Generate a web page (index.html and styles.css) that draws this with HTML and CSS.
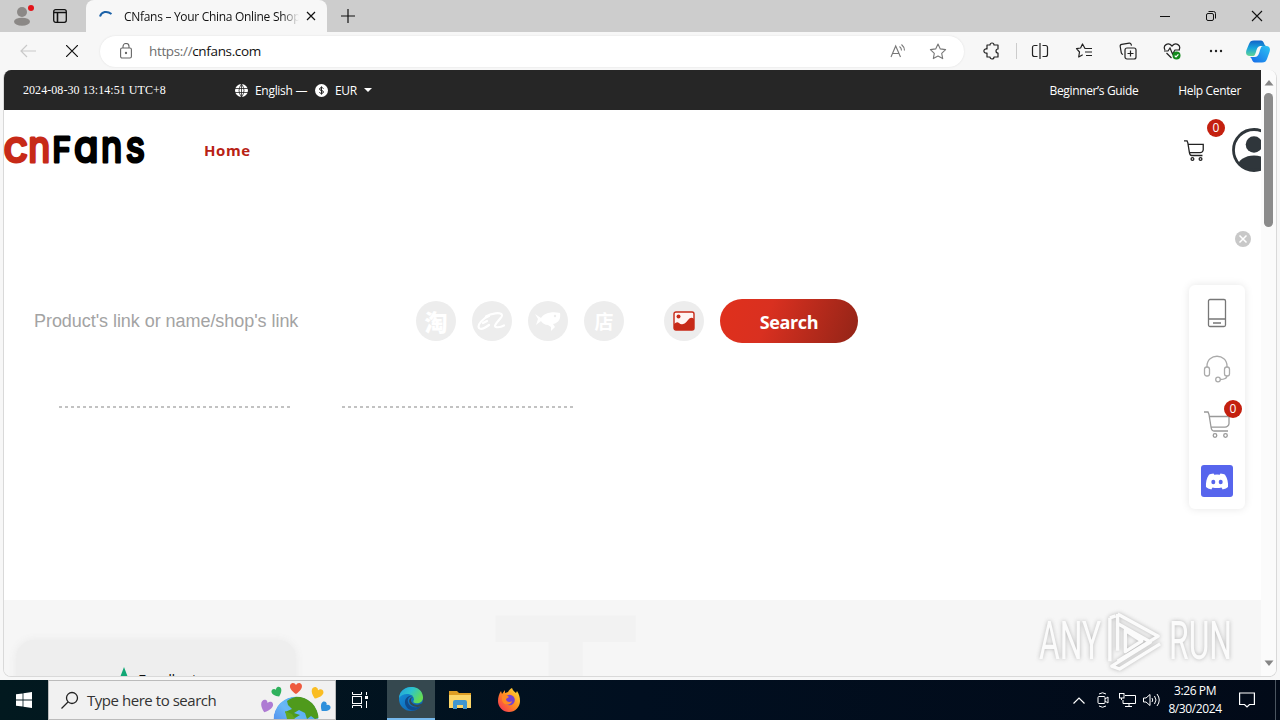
FILE: index.html
```html
<!DOCTYPE html>
<html lang="en">
<head>
  <meta charset="UTF-8" />
  <meta name="viewport" content="width=device-width, initial-scale=1" />
  <title>CNfans – Your China Online Shop</title>
  <link rel="stylesheet" href="styles.css">
</head>
<body>
  <div class="tabstrip">
    <svg class="profile" width="26" height="26" viewBox="0 0 26 26"><circle cx="13" cy="9" r="5" fill="#8b8886"/><ellipse cx="13" cy="18.700" rx="8" ry="4" fill="#8b8886"/><circle cx="22" cy="5" r="3" fill="#e3141a"/></svg>
    <svg class="workspaces" width="14" height="14" viewBox="0 0 14 14" fill="none" stroke="#111" stroke-width="1.300"><rect x=".7" y=".7" width="12.600" height="12.600" rx="2"/><path d="M1 3.500h12M4.500 3.500v10" stroke-width="1.600"/></svg>
    <div class="tab">
      <svg class="spinner" width="14" height="14" viewBox="0 0 14 14" fill="none" stroke="#1c62a8" stroke-width="2"><path d="M1 6.500C2.500 1.500 8 .5 12.500 4"/></svg>
      <span class="tab-title">CNfans – Your China Online Shop</span>
      <svg class="tab-close" width="10" height="10" viewBox="0 0 10 10" stroke="#111" stroke-width="1.200"><path d="M1 1l8 8M9 1l-8 8"/></svg>
    </div>
    <svg class="new-tab" width="14" height="14" viewBox="0 0 14 14" stroke="#111" stroke-width="1.200"><path d="M7 0v14M0 7h14"/></svg>
    <div class="window-buttons">
      <svg width="12" height="12" viewBox="0 0 12 12" stroke="#111"><path d="M1 6.500h10"/></svg>
      <svg width="12" height="12" viewBox="0 0 12 12" fill="none" stroke="#111"><rect x="1.500" y="3.500" width="7" height="7" rx="1.500"/><path d="M3.500 1.500h5a2 2 0 0 1 2 2v5"/></svg>
      <svg width="12" height="12" viewBox="0 0 12 12" stroke="#111" stroke-width="1.100"><path d="M1 1l10 10M11 1L1 11"/></svg>
    </div>
  </div>

  <div class="toolbar">
    <svg class="back" width="16" height="14" viewBox="0 0 16 14" fill="none" stroke="#c9c9c9" stroke-width="1.200"><path d="M16 7H1M7 1L1 7l6 6"/></svg>
    <svg class="stop" width="12" height="12" viewBox="0 0 12 12" stroke="#111" stroke-width="1.200"><path d="M0 0l12 12M12 0L0 12"/></svg>
    <div class="address">
      <svg class="lock" width="12" height="16" viewBox="0 0 12 16" fill="none" stroke="#666" stroke-width="1.100"><rect x=".6" y="5" width="10.800" height="10" rx="1.500"/><path d="M3 5V3.500a3 3 0 0 1 6 0V5"/><circle cx="6" cy="10" r=".6" fill="#666"/></svg>
      <span class="url"><span class="scheme">https://</span>cnfans.com</span>
      <svg class="read" width="17" height="16" viewBox="0 0 17 16" fill="none" stroke="#777" stroke-width="1.100"><path d="M1 14L5.700 3l4.800 11M2.700 10.500h6M9.500 3.500q2 1.500 2 4M11.500 1.500q3 2.500 3 6"/></svg>
      <svg class="fav" width="18" height="17" viewBox="0 0 18 17" fill="none" stroke="#777" stroke-width="1.100" stroke-linejoin="round"><path d="M9 1l2.300 4.900 5.300.7-3.900 3.700 1 5.300L9 13l-4.700 2.600 1-5.300L1.400 6.600l5.300-.7z"/></svg>
    </div>
    <div class="tools">
      <svg width="18" height="18" viewBox="0 0 18 18" fill="none" stroke="#222" stroke-width="1.200" stroke-linejoin="round"><path d="M4 3h3a2 2 0 0 1 4 0h4v4a2 2 0 1 0 0 4v4h-4a2 2 0 0 1-4 0H4v-4a2.200 2.200 0 1 1 0-4z"/></svg>
      <i class="tool-sep"></i>
      <svg width="18" height="18" viewBox="0 0 18 18" fill="none" stroke="#222" stroke-width="1.200"><path d="M6.500 3.500H3.500a2 2 0 0 0-2 2v7a2 2 0 0 0 2 2h3M11.500 3.500h3a2 2 0 0 1 2 2v7a2 2 0 0 1-2 2h-3M9 1v16"/></svg>
      <svg width="18" height="18" viewBox="0 0 18 18" fill="none" stroke="#222" stroke-width="1.200" stroke-linejoin="round"><path d="M13 6.500H10L7.500 2 5.600 6 1.500 6.700l3 3.300-.8 5 4-2.200M10.500 6.500H17M10 10h7M11 13.500h6"/></svg>
      <svg width="18" height="18" viewBox="0 0 18 18" fill="none" stroke="#222" stroke-width="1.200"><rect x="6" y="6" width="11" height="11" rx="2"/><path d="M11.500 8.500v6M8.500 11.500h6M4 12.500c-1-.3-1.500-.8-1.700-1.700L1.200 4.500c-.2-1.200.4-2 1.500-2.200l7.500-1.100c1.200-.2 2 .4 2.300 2.500"/></svg>
      <svg width="18" height="18" viewBox="0 0 18 18" fill="none" stroke="#222" stroke-width="1.200"><path d="M2 8C-.5 3.500 5-.5 9 4c4-4.500 9.500-.5 7 4M3.500 11l5 5M1 9h4l2-3 2.500 6L12 8h5"/><circle cx="13.500" cy="13.500" r="4" fill="#138a1c" stroke="none"/><path d="M11.700 13.600l1.300 1.300 2.400-2.600" stroke="#fff"/></svg>
      <svg width="18" height="18" viewBox="0 0 18 18" fill="#222"><circle cx="4" cy="9" r="1.200"/><circle cx="9" cy="9" r="1.200"/><circle cx="14" cy="9" r="1.200"/></svg>
      <svg class="copilot" width="24" height="23" viewBox="0 0 24 23">
        <defs>
          <linearGradient id="cp1" x1="0" y1="0" x2="0" y2="1"><stop offset="0" stop-color="#1263c8"/><stop offset=".5" stop-color="#18a5dc"/><stop offset="1" stop-color="#63d593"/></linearGradient>
          <linearGradient id="cp2" x1="1" y1="0" x2="0" y2="1"><stop offset="0" stop-color="#2bc4f3"/><stop offset="1" stop-color="#1668e8"/></linearGradient>
        </defs>
        <path d="M8 .5h7c3 0 3 5 5 5.500h-5c-3 0-4 2-5 6l-1 2.500c-.5 1-1 1.500-3 1.500H4c-4 0-4.500-3-3.500-6L3 4C4 1.500 5 .5 8 .5z" fill="url(#cp1)"/>
        <path d="M16 22.500H9c-3 0-3-5-5-5.500h5c3 0 4-3 5-7l1-2.500C15.500 6.500 16 6 18 6h2c4 0 4.500 3 3.500 6L21 19c-1 2.500-2 3.500-5 3.500z" fill="url(#cp2)"/>
      </svg>
    </div>
  </div>

  <div class="viewport">
    <div class="page">
      <div class="topbar">
        <span class="clock">2024-08-30 13:14:51 UTC+8</span>
        <div class="locale">
          <svg width="13" height="13" viewBox="0 0 13 13"><circle cx="6.500" cy="6.500" r="6.500" fill="#fff"/><path d="M0 4.500h13M0 8.500h13M6.500 0v13M6.500 0Q1.500 6.500 6.500 13Q11.500 6.500 6.500 0" fill="none" stroke="#262626" stroke-width=".8"/></svg>
          <span class="lang">English —</span>
          <svg width="13" height="13" viewBox="0 0 13 13"><circle cx="6.500" cy="6.500" r="6.500" fill="#fff"/><path d="M8.500 4.600Q8 3.600 6.500 3.600q-1.900 0-1.900 1.400T6.500 6.500t1.900 1.500-1.900 1.400q-1.600 0-2.100-1.100M6.500 2.400v8.200" fill="none" stroke="#262626"/></svg>
          <span class="cur">EUR</span>
          <i class="caret"></i>
        </div>
        <div class="top-links">
          <span class="guide">Beginner’s Guide</span>
          <span class="help">Help Center</span>
        </div>
      </div>

      <div class="header">
        <svg class="logo" width="142" height="40" viewBox="0 0 142 40">
          <g class="logo-lower logo-red">
            <text transform="translate(-.5 32)">c</text>
            <text transform="translate(24.200 32) scale(.87 1)">n</text>
          </g>
          <text class="logo-upper" transform="translate(48.500 32) scale(.92 1)">F</text>
          <g class="logo-lower">
            <text transform="translate(70 32) scale(.93 1)">a</text>
            <text transform="translate(97 32) scale(.84 1)">n</text>
            <text transform="translate(121.800 32) scale(.84 1)">s</text>
          </g>
        </svg>
        <span class="nav-home">Home</span>
        <div class="cart">
          <svg width="20" height="21" viewBox="0 0 26 27" fill="none" stroke="#222" stroke-width="1.700"><use href="#cart-shape"/></svg>
          <span class="badge">0</span>
        </div>
        <svg class="avatar" width="44" height="44" viewBox="0 0 44 44"><defs><clipPath id="av"><circle cx="22" cy="22" r="21"/></clipPath></defs><circle cx="22" cy="16.500" r="8.300" fill="#2f363b"/><ellipse cx="22" cy="39" rx="16.500" ry="11.500" fill="#2f363b" clip-path="url(#av)"/><circle cx="22" cy="22" r="20.500" fill="none" stroke="#2f363b" stroke-width="2.800"/></svg>
      </div>

      <div class="hero">
        <div class="search-row">
          <span class="placeholder">Product's link or name/shop's link</span>
          <div class="sources">
            <span class="round"><b class="tao">淘</b></span>
            <span class="round"><svg width="30" height="22" viewBox="0 0 30 22" fill="none" stroke="#fff" stroke-linecap="round" stroke-linejoin="round"><path d="M12 6C6 8 0 15 2 18c2 2 6 0 10-3M6 13l4-2" stroke-width="2.200"/><path d="M9 6.500C14 3 24 2 25 5c1 2-7 8-7 11 0 2 5 1.500 9-.5" stroke-width="2.200"/></svg></span>
            <span class="round"><svg width="28" height="24" viewBox="0 0 28 24" fill="#fff"><path d="M1 5l6 4c3-5 11-7 19-5 1 5-1 10-7 11l2 3-4 4v-4l-3-2c-3 0-6-2-7-4L2 16l2-6z"/><circle cx="21" cy="7" r="1.200" fill="#ededed"/></svg></span>
            <span class="round"><b class="dian">店</b></span>
          </div>
          <span class="round"><svg width="22" height="20" viewBox="0 0 22 20"><rect x="1" y="1" width="20" height="18" rx="2" fill="#fff5f3" stroke="#c72a18" stroke-width="1.400"/><circle cx="5.500" cy="5.500" r="2" fill="#c72a18"/><path d="M1 13q3-3 5-1t4 1q2 0 5-4t6-1v9q0 2-2 2H3q-2 0-2-2z" fill="#c72a18"/></svg></span>
          <span class="search-btn">Search</span>
        </div>
        <div class="dashes"><i class="dash"></i><i class="dash"></i></div>
      </div>

      <div class="reviews">
        <div class="review-card">
          <svg width="28" height="28" viewBox="0 0 28 28" fill="#12a876"><path d="M14 0l4 10.500h10l-8 6.500 3 11-9-6.500L5 28l3-11-8-6.500h10z"/></svg>
          <span class="excellent">Excellent</span>
        </div>
        <span class="ghost">T</span>
      </div>
    </div>
    <div class="scrollbar">
      <svg width="10" height="6" viewBox="0 0 10 6" fill="#858585"><path d="M5 0l4.500 5.500h-9z"/></svg>
      <i class="thumb"></i>
      <svg class="down" width="10" height="6" viewBox="0 0 10 6" fill="#858585"><path d="M5 6L.5.500h9z"/></svg>
    </div>
  </div>

  <svg class="close-panel" width="16" height="16" viewBox="0 0 16 16"><circle cx="8" cy="8" r="8" fill="#c8c8c8"/><path d="M4.500 4.500l7 7M11.500 4.500l-7 7" stroke="#fff" stroke-width="1.500"/></svg>
  <div class="side-panel">
    <svg width="20" height="30" viewBox="0 0 20 30" fill="none" stroke="#777" stroke-width="1.300"><rect x="1.500" y="1.500" width="17" height="27" rx="1.500"/><path d="M1.500 21h17M6 25h8"/></svg>
    <svg width="28" height="28" viewBox="0 0 28 28" fill="none" stroke="#aaa" stroke-width="1.300"><path d="M4 12v-1C4-2 24-2 24 11v1M24 20.500c0 3-4 4-7 4"/><rect x="1.500" y="12" width="5" height="9" rx="2.300"/><rect x="21.500" y="12" width="5" height="9" rx="2.300"/><circle cx="15" cy="24.500" r="2.300"/></svg>
    <div class="side-cart">
      <svg width="26" height="27" viewBox="0 0 26 27" fill="none" stroke="#999" stroke-width="1.300"><g id="cart-shape"><path d="M0 1h4l1 2.500L7 16c.4 3 1 4 3 4h14M5.300 5.500H25v7c0 2-2 3.700-4 3.700H7"/><circle cx="11" cy="24.500" r="1.800"/><circle cx="21.500" cy="24.500" r="1.800"/></g></svg>
      <span class="badge">0</span>
    </div>
    <svg width="32" height="32" viewBox="0 0 32 32"><rect width="32" height="32" rx="3" fill="#5765ed"/><path d="M12.500 8.500c-2 .2-3.500.7-4.500 1.300C5.500 13.500 4.700 17.500 5 22c2 1.500 3.700 2.100 5.300 2.400l1.200-2q4.500 1.200 9 0l1.200 2c1.600-.3 3.500-.9 5.300-2.400.4-4.500-.6-8.500-3-12.200-1-.6-2.500-1.100-4.500-1.300l-.8 1.300q-2.700-.4-5.400 0z" fill="#fff"/><ellipse cx="12.300" cy="17" rx="2" ry="2.200" fill="#5765ed"/><ellipse cx="19.700" cy="17" rx="2" ry="2.200" fill="#5765ed"/></svg>
  </div>

  <div class="watermark">
    <span class="wm-text">ANY</span>
    <svg width="58" height="64" viewBox="0 0 60 64" fill="none" stroke="#fff" stroke-width="3.500" stroke-linejoin="round"><path d="M4 8v45M12 4v38M12 4l42 23L12 53M4 8l6-2M12 14l34 19L6 58l8 3 42-26M20 21v22l17-11z"/></svg>
    <span class="wm-text">RUN</span>
  </div>

  <div class="taskbar">
    <div class="start"><svg width="16" height="16" viewBox="0 0 16 16" fill="#fff"><path d="M0 2.300L6.600 1.400V7.600H0zM7.400 1.300L16 0v7.600H7.400zM0 8.400h6.600v6.200L0 13.700zM7.400 8.400H16V16l-8.600-1.300z"/></svg></div>
    <div class="search-box">
      <svg width="18" height="18" viewBox="0 0 18 18" fill="none" stroke="#222" stroke-width="1.300"><circle cx="11" cy="7" r="5.500"/><path d="M7 11l-6.500 6.500"/></svg>
      <span class="search-text">Type here to search</span>
      <svg class="earth" width="72" height="38" viewBox="0 0 72 38">
        <defs>
          <path id="heart" d="M0 6C-9 0-6-5-3-5Q-1-5 0-3Q1-5 3-5C6-5 9 0 0 6z"/>
          <linearGradient id="sea" x1="0" y1="1" x2="1" y2="0"><stop offset="0" stop-color="#3f6fe8"/><stop offset=".5" stop-color="#6ab8f5"/><stop offset="1" stop-color="#3fa0ef"/></linearGradient>
          <clipPath id="globe"><circle cx="36" cy="38" r="22.500"/></clipPath>
        </defs>
        <g clip-path="url(#globe)"><circle cx="36" cy="38" r="22.500" fill="url(#sea)"/><path d="M27 20q8-6 17-4l13 8 4 12-6 2-4-3-4 3-2-6-6-3-5 3 6 2-5 3-7-2-3-4 7-3-4-4z" fill="#4f9a1c"/><path d="M25 30l7 3 3 5h-8z" fill="#63a81e"/></g>
        <use href="#heart" transform="translate(36 7)" fill="#ee5a3e"/>
        <use href="#heart" transform="translate(17 11) rotate(-25) scale(.85)" fill="#2fb15c"/>
        <use href="#heart" transform="translate(57 12) rotate(22)" fill="#fabd22"/>
        <use href="#heart" transform="translate(6.500 25) rotate(20) scale(1 1.100)" fill="#ae7bd3"/>
        <use href="#heart" transform="translate(65 26) rotate(40) scale(.85)" fill="#2e90dc"/>
      </svg>
    </div>
    <div class="task-item"><svg width="16" height="16" viewBox="0 0 16 16" fill="none" stroke="#fff"><rect x=".5" y="4.500" width="9" height="7"/><path d="M.5 0v2.500h9V0M.5 16v-2.500h9V16M14.500 0v3M14.500 9v7"/><path d="M13 4h3v3h-3z" fill="#fff" stroke="none"/></svg></div>
    <div class="task-item active"><svg width="24" height="24" viewBox="0 0 24 24">
      <defs><linearGradient id="eg1" x1="0" y1="0" x2="1" y2=".5"><stop offset="0" stop-color="#239ddd"/><stop offset=".5" stop-color="#2cc3ce"/><stop offset="1" stop-color="#65dc53"/></linearGradient><linearGradient id="eg2" x1="0" y1="0" x2="1" y2="1"><stop offset="0" stop-color="#1695dd"/><stop offset="1" stop-color="#0d57a8"/></linearGradient></defs>
      <circle cx="12" cy="12" r="12" fill="url(#eg2)"/><path d="M0 11C1-3 23-4 24 10c.3 5-4 7-8 6-3-.8-1-2-1-4C14 6 4 5 0 11z" fill="url(#eg1)"/><path d="M14 9c-4 0-6 3-5 6 1 5 8 7 13 4-5 7-15 5-16-3-.5-5 4-8 8-7z" fill="#114a8b"/><path d="M14.500 10c-4 1-3 6 1 7.500 3 1 6 0 8-1.500v2l-2 1.500c-5 1.500-10-1-11-4-1-3 1-5.500 4-5.500z" fill="#35484f"/></svg></div>
    <div class="task-item"><svg width="22" height="20" viewBox="0 0 22 20"><path d="M0 1h8l2 2h12v4H0z" fill="#dd9d24"/><path d="M0 5h22v13H0z" fill="#fbd568"/><path d="M4 19v-7q0-2 2-2h10q2 0 2 2v7h-4v-4H8v4z" fill="#3f96cf"/></svg></div>
    <div class="task-item"><svg width="24" height="24" viewBox="0 0 24 24">
      <defs><linearGradient id="ff" x1="1" y1="0" x2="0" y2="1"><stop offset="0" stop-color="#ffe838"/><stop offset=".5" stop-color="#ff8b20"/><stop offset="1" stop-color="#f4265f"/></linearGradient></defs>
      <path d="M15 0c1 3 3 4 4 5l1-2c2 3 3 6 3 10a11 11 0 0 1-22 0C1 9 2 6 4 3l1 3 3-4v3l3-1c1-2 2-3 4-4z" fill="url(#ff)"/><circle cx="12.500" cy="12" r="5.300" fill="#7542cf"/><path d="M5 8c3-2 5-1 7 1l-3 2c0 3 4 4 6 2-1 5-9 5-10-1z" fill="#ff8a22"/></svg></div>
    <div class="tray">
      <svg width="12" height="7" viewBox="0 0 12 7" fill="none" stroke="#fff" stroke-width="1.200"><path d="M.5 6.500L6 1l5.500 5.500"/></svg>
      <svg width="12" height="16" viewBox="0 0 12 16" fill="none" stroke="#fff"><rect x="1" y="4.500" width="7" height="7" rx="1"/><path d="M8 7l3-2v6L8 9M2 2q3.500-2.500 7 0M2 14q3.500 2.500 7 0"/></svg>
      <svg width="17" height="14" viewBox="0 0 17 14" fill="none" stroke="#fff"><path d="M6 2.500h10.500v8H4V7M10 10.500v3M6 13.500h7"/><rect x=".5" y=".5" width="4.500" height="4.500"/><path d="M2.500 5v2"/></svg>
      <svg width="17" height="14" viewBox="0 0 17 14" fill="none" stroke="#fff"><path d="M.5 5v4h2.500l4 3.500v-11L3 5zM9 5q1.500 2 0 4M11.500 3q3 4 0 8M14 1q4.500 6 0 12"/></svg>
      <div class="datetime"><span class="time">3:26 PM</span><span class="date">8/30/2024</span></div>
      <svg class="notify" width="16" height="16" viewBox="0 0 16 16" fill="none" stroke="#fff" stroke-width="1.200"><path d="M.6 1h14.800v11.500H10.500L8 15l-2.500-2.500H.6z"/></svg>
      <i class="peek"></i>
    </div>
  </div>
</body>
</html>
```

FILE: styles.css
```css
* {
  margin: 0; padding: 0; box-sizing: border-box;
}
body {
  width: 1280px; height: 720px;
  overflow: hidden;
  position: relative;
  background: #f7f7f7;
  font-family: "Open Sans", "Noto Sans", sans-serif;
  font-size: 12px;
  color: #111;
}
svg {
  display: block;
  flex-shrink: 0;
}
span {
  white-space: nowrap;
}
.tabstrip {
  height: 32px;
  background: #cdcdcd;
  display: flex;
  align-items: center;
}
.profile { margin-left: 9px; }
.workspaces { margin-left: 18px; }
.tab {
  width: 241px;
  height: 32px;
  margin-left: 19px;
  padding-left: 13px;
  background: #f7f7f7;
  border-radius: 8px 8px 0 0;
  display: flex;
  align-items: center;
}
.spinner { margin-top: 1px; }
.tab-title {
  width: 175px;
  margin-left: 11px;
  overflow: hidden;
  letter-spacing: -0.3px;
  -webkit-mask-image: linear-gradient(90deg, #000 90%, transparent);
}
.tab-close { margin-left: 7px; }
.new-tab { margin-left: 14px; }
.window-buttons {
  margin-left: auto;
  padding-right: 17px;
  display: flex;
  gap: 34px;
}
.toolbar {
  height: 38px;
  display: flex;
  align-items: center;
  background: #f7f7f7;
}
.back { margin-left: 20px; }
.stop { margin-left: 30px; }
.address {
  width: 864px;
  height: 31px;
  margin-left: 22px;
  padding: 0 17px 0 20px;
  background: #fff;
  border-radius: 16px;
  box-shadow: 0 0 2px #ddd;
  display: flex;
  align-items: center;
}
.url {
  margin-left: 17px;
  font-size: 13.500px;
  letter-spacing: -0.35px;
}
.scheme { color: #6d6d6d; }
.read { margin-left: auto; }
.fav { margin-left: 22px; }
.tools {
  flex: 1;
  display: flex;
  align-items: center;
  padding-left: 19px;
  gap: 26px;
}
.tool-sep {
  width: 1px;
  height: 16px;
  margin: 0 -12px 0 -11px;
  background: #ccc;
}
.copilot { margin-left: -5px; }
.viewport {
  width: 1274px;
  height: 607px;
  margin-left: 3px;
  border: 1px solid #d9d9d9;
  border-top: 0;
  border-radius: 8px;
  overflow: hidden;
  background: #fff;
  display: flex;
}
.page {
  width: 1257px;
  overflow: hidden;
}
.topbar {
  height: 40px;
  background: #262626;
  color: #fff;
  display: flex;
  align-items: center;
  padding: 0 20px 0 19px;
}
.clock {
  width: 212px;
  font-family: "Liberation Serif", serif;
  font-size: 12px;
  letter-spacing: 0.06px;
}
.locale {
  display: flex;
  align-items: center;
}
.lang {
  width: 54px;
  margin: 0 6px 0 7px;
  letter-spacing: -0.3px;
}
.cur { width: 22px; margin-left: 7px; letter-spacing: -0.3px; }
.caret {
  margin-left: 7px;
  border: 4px solid transparent;
  border-top-color: #fff;
  border-bottom: 0;
}
.top-links {
  margin-left: auto;
  display: flex;
  gap: 40px;
  letter-spacing: -0.36px;
}
.header {
  height: 80px;
  display: flex;
  align-items: center;
  position: relative;
}
.logo { overflow: visible; }
.logo text {
  font-family: "Inter", sans-serif;
  font-weight: 400;
  font-feature-settings: "cv11";
  fill: #000;
  stroke: #000;
  stroke-width: 3;
  stroke-linejoin: round;
}
.logo .logo-red text { fill: #c72a18; stroke: #c72a18; }
.logo-lower { font-size: 43px; }
.logo-upper { font-size: 34px; }
.nav-home {
  margin-left: 58px;
  font-size: 15px;
  font-weight: 700;
  letter-spacing: 0.6px;
  color: #b82214;
}
.cart {
  margin-left: auto;
  margin-right: 28px;
  position: relative;
}
.badge {
  position: absolute;
  top: -21px;
  left: 23px;
  width: 18px;
  height: 18px;
  border-radius: 50%;
  background: #c4200f;
  color: #fff;
  text-align: center;
  line-height: 18px;
}
.avatar { margin-right: -15px; }
.hero {
  height: 410px;
  padding-top: 109px;
}
.search-row {
  display: flex;
  align-items: center;
  padding-left: 30px;
}
.placeholder {
  width: 382px;
  font-family: "Liberation Sans", sans-serif;
  font-size: 18px;
  letter-spacing: -0.05px;
  color: #a3a3a3;
}
.sources {
  display: flex;
  gap: 16px;
  margin-right: 40px;
}
.round {
  width: 40px;
  height: 40px;
  border-radius: 50%;
  background: #ededed;
  color: #fff;
  display: flex;
  align-items: center;
  justify-content: center;
}
.tao, .dian {
  font-family: "Noto Sans CJK SC", sans-serif;
  font-weight: 900;
  font-size: 23px;
  line-height: 36px;
}
.dian { font-size: 19px; font-weight: 700; }
.search-btn {
  width: 138px;
  height: 44px;
  margin-left: 16px;
  border-radius: 22px;
  background: linear-gradient(110deg, #e0301c 0%, #d93020 35%, #922417 100%);
  color: #fff;
  font-size: 18px;
  font-weight: 700;
  letter-spacing: -0.4px;
  line-height: 46px;
  text-align: center;
}
.dashes {
  display: flex;
  gap: 52px;
  padding: 63px 0 0 55px;
}
.dash {
  width: 231px;
  height: 2px;
  background: repeating-linear-gradient(90deg, #c2c2c2 0 3px, transparent 3px 6px);
}
.reviews {
  height: 90px;
  padding: 40px 0 0 12px;
  background: #f6f6f6;
  overflow: hidden;
  display: flex;
}
.review-card {
  width: 280px;
  height: 120px;
  padding: 27px 0 0 94px;
  border-radius: 18px;
  background: #eee;
  box-shadow: 0 0 8px #e9e9e9;
  display: flex;
  align-items: flex-start;
}
.excellent {
  font-size: 15px;
  letter-spacing: -0.4px;
  margin: 2px 0 0 0;
}
.ghost {
  margin: -58px 0 0 197px;
  font-family: "Liberation Sans", sans-serif;
  font-size: 238px;
  font-weight: 700;
  line-height: 230px;
  color: #f2f2f2;
}
.scrollbar {
  flex: 1;
  background: #fbfbfb;
  display: flex;
  flex-direction: column;
  align-items: center;
  padding-top: 10px;
}
.thumb {
  width: 9px;
  height: 134px;
  margin-top: 7px;
  border-radius: 5px;
  background: #8b8b8b;
}
.down {
  margin-top: auto;
  margin-bottom: 10px;
}
.close-panel {
  position: absolute;
  left: 1235px;
  top: 231px;
}
.side-panel {
  position: absolute;
  left: 1189px;
  top: 285px;
  width: 56px;
  height: 224px;
  padding: 13px 0 12px;
  border-radius: 6px;
  background: #fff;
  box-shadow: 0 0 8px #e6e6e6;
  display: flex;
  flex-direction: column;
  align-items: center;
  justify-content: space-between;
}
.side-cart { position: relative; }
.side-cart .badge { top: -11px; left: 20px; }
.watermark {
  position: absolute;
  left: 1039px;
  top: 609px;
  display: flex;
  align-items: center;
  gap: 5px;
  opacity: 0.6;
  filter: drop-shadow(0 0 2px #888);
}
.wm-text {
  width: 62px;
  font-family: "Roboto", sans-serif;
  font-size: 54px;
  font-weight: 400;
  line-height: 64px;
  color: #fff;
  transform: scaleX(0.59);
  transform-origin: 0 50%;
}
.taskbar {
  position: absolute;
  left: 0; top: 680px;
  width: 1280px;
  height: 40px;
  background: linear-gradient(90deg, #02191f 0%, #010f20 50%, #020a18 100%);
  color: #fff;
  display: flex;
}
.start {
  width: 48px;
  display: flex;
  align-items: center;
  justify-content: center;
}
.search-box {
  width: 288px;
  height: 40px;
  padding-left: 12px;
  background: #f1f1f1;
  border: 1px solid #bbb;
  color: #333;
  display: flex;
  align-items: center;
}
.search-text {
  margin-left: 8px;
  font-size: 15px;
  letter-spacing: -0.46px;
}
.earth {
  margin-left: auto;
  margin-right: 3px;
}
.task-item {
  width: 48px;
  display: flex;
  align-items: center;
  justify-content: center;
}
.task-item + .task-item { margin-left: 1px; }
.task-item + .active {
  margin-left: 3px;
  background: #35484f;
  border-bottom: 2px solid #76b9ed;
}
.tray {
  margin-left: auto;
  display: flex;
  align-items: center;
}
.tray > svg { margin-right: 12px; }
.tray > svg:nth-child(2) { margin-right: 10px; }
.tray > svg:nth-child(3) { margin-right: 7px; }
.tray > svg:nth-child(4) { margin-right: 7px; }
.datetime {
  width: 56px;
  display: flex;
  flex-direction: column;
  align-items: center;
  line-height: 18px;
  letter-spacing: -0.4px;
}
.tray > .notify { margin: 0 20px 0 16px; }
.peek {
  width: 1px;
  height: 40px;
  margin-right: 4px;
  background: #4b5560;
}
```
